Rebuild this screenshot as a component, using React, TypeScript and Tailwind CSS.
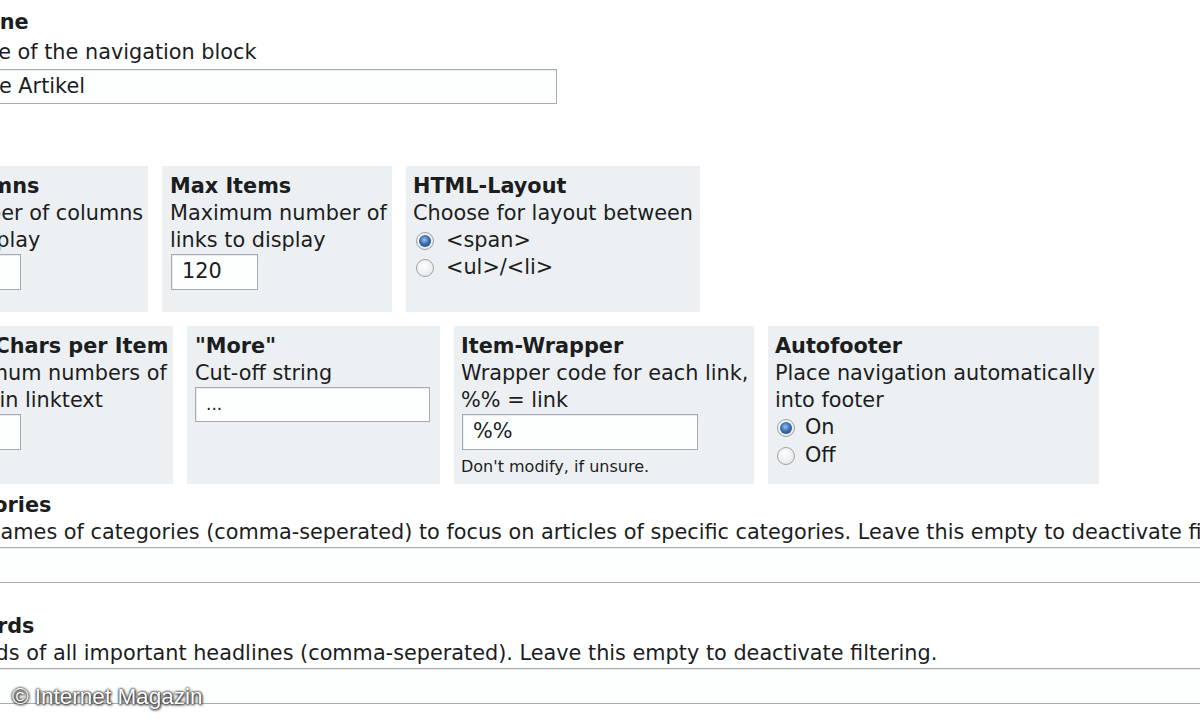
import React from "react";

const font = { fontFamily: '"DejaVu Sans", Verdana, sans-serif' };

function Radio({ checked }: { checked?: boolean }) {
  return (
    <span className="inline-flex w-[18px] h-[18px] shrink-0 items-center justify-center rounded-full border border-[#9aa3a8] bg-[radial-gradient(circle_at_40%_35%,#ffffff,#dfe3e5)]">
      {checked && (
        <span className="w-[12px] h-[12px] rounded-full bg-[radial-gradient(circle_at_45%_40%,#9cc4ee_0%,#3a6fb0_45%,#133a6e_100%)]" />
      )}
    </span>
  );
}

function Input({ value, className }: { value?: string; className: string }) {
  return (
    <div
      className={`border border-[#a6adb0] bg-[#fdfefe] flex items-center whitespace-nowrap overflow-hidden shadow-[inset_1px_1px_1px_rgba(0,0,0,0.08)] ${className}`}
    >
      {value}
    </div>
  );
}

function Title({ children }: { children: React.ReactNode }) {
  return <div className="font-bold leading-[27px] whitespace-nowrap">{children}</div>;
}

function Line({ children }: { children: React.ReactNode }) {
  return <div className="leading-[27px] whitespace-nowrap">{children}</div>;
}

export default function App() {
  return (
    <div
      className="relative w-[1200px] h-[720px] overflow-hidden bg-white text-[#1b1d1e] text-[20.8px]"
      style={font}
    >
      {/* Headline section */}
      <div className="ml-[-75px] pt-[9px]">
        <Title>Headline</Title>
        <div className="mt-[3px]">
          <Line>The title of the navigation block</Line>
        </div>
        <Input value="Weitere Artikel" className="mt-[3px] w-[632px] h-[35px] pl-[6px]" />
      </div>

      {/* Row 1 */}
      <div className="flex gap-[14px] ml-[-69px] mt-[62px]">
        <div className="w-[217px] h-[146px] bg-[#edf0f2] pl-[8px] pt-[7px]">
          <Title>Columns</Title>
          <Line>Number of columns</Line>
          <Line>to display</Line>
          <Input value="" className="w-[82px] h-[36px]" />
        </div>
        <div className="w-[230px] h-[146px] bg-[#edf0f2] pl-[8px] pt-[7px]">
          <Title>Max Items</Title>
          <Line>Maximum number of</Line>
          <Line>links to display</Line>
          <Input value="120" className="w-[87px] h-[36px] ml-[1px] pl-[10px]" />
        </div>
        <div className="w-[294px] h-[146px] bg-[#edf0f2] pl-[7px] pt-[7px]">
          <Title>HTML-Layout</Title>
          <Line>Choose for layout between</Line>
          <div className="flex items-center gap-[12px] h-[27px] pl-[3px]">
            <Radio checked />
            <span>&lt;span&gt;</span>
          </div>
          <div className="flex items-center gap-[12px] h-[27px] pl-[3px]">
            <Radio />
            <span>&lt;ul&gt;/&lt;li&gt;</span>
          </div>
        </div>
      </div>

      {/* Row 2 */}
      <div className="flex gap-[14px] ml-[-69px] mt-[14px]">
        <div className="w-[242px] h-[158px] bg-[#edf0f2] pl-[8px] pt-[7px]">
          <Title>Max Chars per Item</Title>
          <Line>Maximum numbers of</Line>
          <Line>signs in linktext</Line>
          <Input value="" className="w-[82px] h-[36px]" />
        </div>
        <div className="w-[253px] h-[158px] bg-[#edf0f2] pl-[8px] pt-[7px]">
          <Title>"More"</Title>
          <Line>Cut-off string</Line>
          <Input value="..." className="w-[235px] h-[35px] text-[17px] pl-[10px]" />
        </div>
        <div className="w-[300px] h-[158px] bg-[#edf0f2] pl-[7px] pt-[7px]">
          <Title>Item-Wrapper</Title>
          <Line>Wrapper code for each link,</Line>
          <Line>%% = link</Line>
          <Input value="%%" className="w-[236px] h-[36px] ml-[1px] pl-[10px]" />
          <div className="mt-[7px] text-[16px] leading-[20px] whitespace-nowrap">Don't modify, if unsure.</div>
        </div>
        <div className="w-[331px] h-[158px] bg-[#edf0f2] pl-[7px] pt-[7px]">
          <Title>Autofooter</Title>
          <Line>Place navigation automatically</Line>
          <Line>into footer</Line>
          <div className="flex items-center gap-[10px] h-[28px] pl-[2px]">
            <Radio checked />
            <span>On</span>
          </div>
          <div className="flex items-center gap-[10px] h-[27px] pl-[2px]">
            <Radio />
            <span>Off</span>
          </div>
        </div>
      </div>

      {/* Categories */}
      <div className="ml-[-75px] mt-[8px]">
        <Title>Categories</Title>
        <Line>
          Enter names of categories (comma-seperated) to focus on articles of specific categories. Leave this empty to
          deactivate filtering.
        </Line>
        <Input value="" className="mt-[1px] w-[1400px] h-[36px]" />
      </div>

      {/* Keywords */}
      <div className="ml-[-80px] mt-[30px]">
        <Title>Keywords</Title>
        <Line>Keywords of all important headlines (comma-seperated). Leave this empty to deactivate filtering.</Line>
        <Input value="" className="mt-[1px] w-[1400px] h-[36px]" />
      </div>

      {/* Watermark */}
      <div
        className="absolute left-[12px] top-[683px] text-[22.5px] leading-[28px] text-white whitespace-nowrap [text-shadow:0_0_3px_#222,0_0_2px_#222,1px_1px_3px_#333]"
        style={{ fontFamily: '"Liberation Sans", Arial, sans-serif' }}
      >
        © Internet Magazin
      </div>
    </div>
  );
}
